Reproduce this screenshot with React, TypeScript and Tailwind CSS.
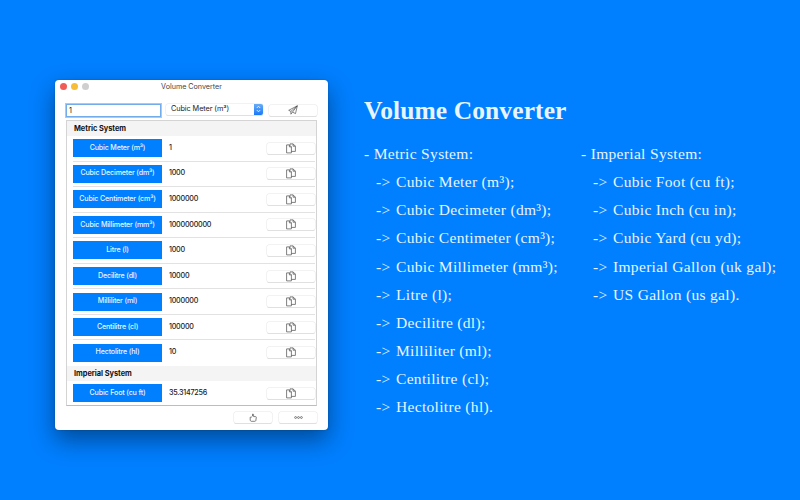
import { clsx } from "clsx";

type Unit = { name: string; value: string };

const metricUnits: Unit[] = [
  { name: "Cubic Meter (m³)", value: "1" },
  { name: "Cubic Decimeter (dm³)", value: "1000" },
  { name: "Cubic Centimeter (cm³)", value: "1000000" },
  { name: "Cubic Millimeter (mm³)", value: "1000000000" },
  { name: "Litre (l)", value: "1000" },
  { name: "Decilitre (dl)", value: "10000" },
  { name: "Milliliter (ml)", value: "1000000" },
  { name: "Centilitre (cl)", value: "100000" },
  { name: "Hectolitre (hl)", value: "10" },
];

const imperialUnits: Unit[] = [{ name: "Cubic Foot (cu ft)", value: "35.3147256" }];

const metricList = [
  "Cubic Meter (m³);",
  "Cubic Decimeter (dm³);",
  "Cubic Centimeter (cm³);",
  "Cubic Millimeter (mm³);",
  "Litre (l);",
  "Decilitre (dl);",
  "Milliliter (ml);",
  "Centilitre (cl);",
  "Hectolitre (hl).",
];

const imperialList = [
  "Cubic Foot (cu ft);",
  "Cubic Inch (cu in);",
  "Cubic Yard (cu yd);",
  "Imperial Gallon (uk gal);",
  "US Gallon (us gal).",
];

function CopyIcon() {
  return (
    <svg width="10" height="11" viewBox="0 0 10 11" fill="none" stroke="#555" strokeWidth="0.75">
      <path d="M.6 1.9h2.8l2 2v6H.6Z" />
      <path d="M3.4 1.9v2h2" />
      <path d="M4 1.9V.9h3.1l2.3 2.3v5.2h-4M7.1.9v2.3h2.3" />
    </svg>
  );
}

function PlaneIcon() {
  return (
    <svg width="10" height="10" viewBox="0 0 10 10" fill="none" stroke="#444" strokeWidth="0.65" strokeLinejoin="round">
      <path d="M9.3.8.7 5.3l2.2 1.1L9.3.8 4.5 7.1l3 1.5L9.3.8Z" />
      <path d="M2.9 6.4v2.8l1.6-2.1" />
    </svg>
  );
}

function ThumbIcon() {
  return (
    <svg width="8" height="9" viewBox="0 0 8 9" fill="none" stroke="#555" strokeWidth="0.75" strokeLinejoin="round">
      <path d="M2.3 4.2 3.5 3V1.1q.9-.4 1.1.5v2h2q.8.1.7.9L6.8 7.6q-.2.7-1 .7H2.2L1.2 7.5V4.2Z" />
    </svg>
  );
}

function MacButton({ className, children }: { className?: string; children: React.ReactNode }) {
  return (
    <button
      className={clsx(
        "flex h-[11px] items-center justify-center rounded-[2px] bg-white shadow-[0_0_0_0.5px_#e6e6e6,0_1px_0.5px_#dadada]",
        className
      )}
    >
      {children}
    </button>
  );
}

function SectionHeader({ title }: { title: string }) {
  return (
    <div className="flex h-[15px] shrink-0 items-center bg-[#f4f4f4] pt-px pl-[7px] text-[7.4px] font-bold tracking-[-0.03px] text-[#111]">
      {title}
    </div>
  );
}

function UnitRow({ unit, last }: { unit: Unit; last?: boolean }) {
  return (
    <div className="flex h-[25.55px] shrink-0 items-center pl-1.5 pr-[1.5px]">
      <div
        className={clsx(
          "flex h-full w-full items-center border-b",
          last ? "border-transparent" : "border-[#e2e2e2]"
        )}
      >
        <div className="flex h-[18px] w-[89px] items-center justify-center bg-[#007fff] text-[7.1px] font-medium tracking-[-0.16px] whitespace-nowrap text-[#eaf5ff]">
          {unit.name}
        </div>
        <span className="ml-[7px] text-[7.2px] font-medium tracking-[-0.25px] text-[#222]">{unit.value}</span>
        <MacButton className="ml-auto w-12">
          <CopyIcon />
        </MacButton>
      </div>
    </div>
  );
}

function ConverterWindow() {
  return (
    <div className="mt-20 ml-[55px] flex h-[350px] w-[273px] shrink-0 flex-col rounded-[4px] bg-white font-['Inter',sans-serif] text-[#222] shadow-[0_10px_24px_rgba(0,0,0,0.42),0_0_2px_rgba(0,0,0,0.25)]">
      <div className="grid h-[13px] grid-cols-[1fr_auto_1fr] items-center pl-[5px] pr-[5px]">
        <div className="flex gap-1">
          <span className="size-[7px] rounded-full bg-[#f15c57]" />
          <span className="size-[7px] rounded-full bg-[#f6bd3b]" />
          <span className="size-[7px] rounded-full bg-[#cfcfcf]" />
        </div>
        <span className="pt-px text-[7.15px] text-[#444]">Volume Converter</span>
      </div>

      <div className="mt-[10px] flex h-[14px] items-center pl-[11px]">
        <div className="flex h-[13px] w-[95px] items-center border border-[#72aceb] bg-white pt-[2px] pl-[2px] text-[7.2px] shadow-[0_0_0_1px_#a8cbf3]">
          1
        </div>
        <div className="mb-[2px] ml-[5px] flex h-[11px] w-[97px] items-center justify-between overflow-hidden rounded-[2px] bg-white pl-[5px] text-[7.3px] tracking-[-0.08px] shadow-[0_0_0_0.5px_#e6e6e6,0_1px_0.5px_#dadada]">
          <span className="pt-px">Cubic Meter (m³)</span>
          <span className="flex h-[11px] w-[9px] items-center justify-center bg-linear-to-b from-[#66adf8] to-[#1777f5]">
            <svg width="5" height="8" viewBox="0 0 5 8" fill="none" stroke="white" strokeWidth="0.8">
              <path d="M.8 3 2.5 1.2 4.2 3M.8 5l1.7 1.8L4.2 5" />
            </svg>
          </span>
        </div>
        <MacButton className="ml-[6px] w-12">
          <PlaneIcon />
        </MacButton>
      </div>

      <div className="mt-[3px] ml-[11px] flex h-[286px] w-[251px] flex-col border border-[#d4d4d4] border-b-[#bdbdbd]">
        <SectionHeader title="Metric System" />
        {metricUnits.map((u, i) => (
          <UnitRow key={u.name} unit={u} last={i === metricUnits.length - 1} />
        ))}
        <SectionHeader title="Imperial System" />
        {imperialUnits.map((u) => (
          <UnitRow key={u.name} unit={u} last />
        ))}
      </div>

      <div className="mt-[6px] flex justify-end gap-[7px] pr-[11px]">
        <MacButton className="w-[38px]">
          <ThumbIcon />
        </MacButton>
        <MacButton className="w-[38px]">
          <svg width="9" height="3" viewBox="0 0 9 3" fill="none" stroke="#555" strokeWidth="0.7">
            <circle cx="1.6" cy="1.5" r="0.95" />
            <circle cx="4.5" cy="1.5" r="0.95" />
            <circle cx="7.4" cy="1.5" r="0.95" />
          </svg>
        </MacButton>
      </div>
    </div>
  );
}

function UnitList({ title, items, className }: { title: string; items: string[]; className?: string }) {
  return (
    <div className={clsx("text-[15.5px] leading-[28.15px] tracking-[0.32px] whitespace-nowrap", className)}>
      <p>- {title}:</p>
      <ul className="pl-3">
        {items.map((item) => (
          <li key={item} className="flex">
            <span className="w-5">-&gt;</span>
            {item}
          </li>
        ))}
      </ul>
    </div>
  );
}

export default function App() {
  return (
    <main className="flex h-[500px] w-[800px] items-start overflow-hidden bg-[#007fff]">
      <ConverterWindow />
      <section className="mt-[95px] ml-9 font-['Liberation_Serif',serif] text-[#e8f5ff]">
        <h1 className="text-[25.5px] leading-8 font-bold tracking-[0.1px]">Volume Converter</h1>
        <div className="mt-[13px] flex">
          <UnitList title="Metric System" items={metricList} className="w-[217px]" />
          <UnitList title="Imperial System" items={imperialList} />
        </div>
      </section>
    </main>
  );
}
